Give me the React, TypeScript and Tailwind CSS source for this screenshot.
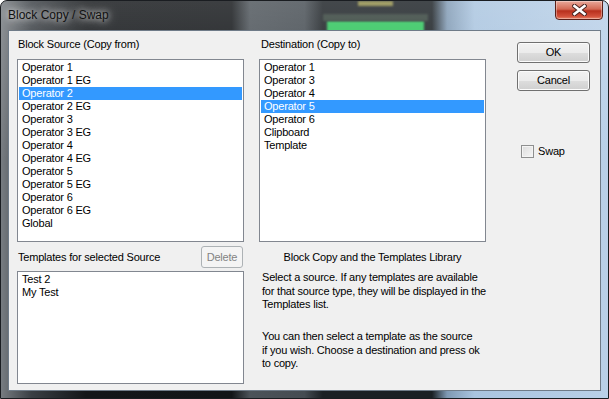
import React from 'react';

const sourceItems = [
  'Operator 1',
  'Operator 1 EG',
  'Operator 2',
  'Operator 2 EG',
  'Operator 3',
  'Operator 3 EG',
  'Operator 4',
  'Operator 4 EG',
  'Operator 5',
  'Operator 5 EG',
  'Operator 6',
  'Operator 6 EG',
  'Global',
];

const destItems = ['Operator 1', 'Operator 3', 'Operator 4', 'Operator 5', 'Operator 6', 'Clipboard', 'Template'];

const templateItems = ['Test 2', 'My Test'];

function ListBox({ items, selected, height }: { items: string[]; selected?: number; height: string }) {
  return (
    <div className={`w-[227px] ${height} border border-[#828790] bg-white p-px`}>
      {items.map((item, i) => (
        <div
          key={item}
          className={`h-[13px] leading-[13px] pl-[3px] whitespace-nowrap ${i === selected ? 'bg-[#3399ff] text-white' : 'text-black'}`}
        >
          {item}
        </div>
      ))}
    </div>
  );
}

function Win7Button({ label, disabled }: { label: string; disabled?: boolean }) {
  if (disabled) {
    return (
      <button className="h-[22px] w-[42px] rounded-[3px] border border-[#adb2b5] bg-[#f4f4f4] text-[#838383]">
        {label}
      </button>
    );
  }
  return (
    <button className="h-[21px] w-[73px] rounded-[3px] border border-[#707070] bg-[linear-gradient(to_bottom,#f2f2f2_0%,#ebebeb_50%,#dddddd_51%,#cfcfcf_100%)] shadow-[inset_0_0_0_1px_#fbfbfb] text-black leading-[19px]">
      {label}
    </button>
  );
}

export default function App() {
  return (
    <div className="relative w-[609px] h-[399px] overflow-hidden rounded-t-[7px] border border-[#1a1d21] bg-[linear-gradient(to_right,#777c81_0%,#3a3f44_5%,#131619_14%,#121518_38%,#4c5359_41%,#454c52_50%,#1b2024_53%,#1a2024_71%,#7f99b3_73.5%,#a9c4df_78%,#b9d0e8_100%)] flex flex-col">
      {/* background bleeding through the glass */}
      <div className="absolute left-[326px] top-[20px] w-[97px] h-[14px] bg-[#2fc45c] blur-[1px]" />
      <div className="absolute left-[322px] top-[13px] w-[105px] h-[7px] bg-[#33413a] blur-[1px]" />
      <div className="absolute left-[357px] top-0 w-[35px] h-[5px] bg-[#8d8a46] blur-[1px]" />
      <div className="absolute inset-0 bg-[linear-gradient(to_bottom,rgba(255,255,255,0.18),rgba(255,255,255,0)_40%)] pointer-events-none" />

      {/* title bar */}
      <div className="relative h-[29px] flex items-start">
        <span className="ml-[7px] mt-[7px] font-['Liberation_Sans',Arial,sans-serif] text-[12px] leading-[15px] text-[#111] [text-shadow:0_0_6px_rgba(255,255,255,0.9),0_0_12px_rgba(255,255,255,0.7)]">
          Block Copy / Swap
        </span>
        <div className="absolute left-[554px] top-[-1px] w-[48px] h-[20px] rounded-b-[4px] border border-[#5a2019] bg-[linear-gradient(to_bottom,#e9a99b_0%,#d36a55_45%,#b8301d_55%,#d2503a_85%,#e8866a_100%)] shadow-[inset_0_0_0_1px_rgba(255,255,255,0.35)] flex items-center justify-center">
          <svg width="15" height="12" viewBox="0 0 15 12">
            <path d="M2.5 2 L12.5 10 M12.5 2 L2.5 10" stroke="#4a2420" strokeWidth="4.5" strokeLinecap="square" />
            <path d="M2.5 2 L12.5 10 M12.5 2 L2.5 10" stroke="#ffffff" strokeWidth="2.6" strokeLinecap="square" />
          </svg>
        </div>
      </div>

      {/* client area */}
      <div className="relative mx-[7px] mb-[7px] flex-1 border border-[#6f7b88] bg-[#f0f0f0] font-['Liberation_Sans',Arial,sans-serif] text-[11px] tracking-[-0.2px] text-black">
        <div className="flex pl-[8px] pt-[6px]">
          {/* left column */}
          <div className="flex flex-col w-[227px]">
            <div className="h-[14px] leading-[14px] pl-px">Block Source (Copy from)</div>
            <div className="mt-[8px]">
              <ListBox items={sourceItems} selected={2} height="h-[183px]" />
            </div>
            <div className="mt-[4px] flex items-center justify-between pl-px pr-px">
              <span className="leading-[14px]">Templates for selected Source</span>
              <Win7Button label="Delete" disabled />
            </div>
            <div className="mt-[3px]">
              <ListBox items={templateItems} height="h-[113px]" />
            </div>
          </div>

          {/* middle column */}
          <div className="ml-[15px] flex flex-col w-[227px]">
            <div className="h-[14px] leading-[14px] pl-[2px]">Destination (Copy to)</div>
            <div className="mt-[8px]">
              <ListBox items={destItems} selected={3} height="h-[183px]" />
            </div>
            <div className="mt-[8px] h-[14px] leading-[14px] text-center">Block Copy and the Templates Library</div>
            <p className="mt-[7px] pl-[3px] leading-[13.5px] whitespace-nowrap">
              Select a source. If any templates are available
              <br />
              for that source type, they will be displayed in the
              <br />
              Templates list.
            </p>
            <p className="mt-[18.5px] pl-[3px] leading-[13.5px] whitespace-nowrap">
              You can then select a template as the source
              <br />
              if you wish. Choose a destination and press ok
              <br />
              to copy.
            </p>
          </div>

          {/* right column */}
          <div className="ml-[31px] flex flex-col w-[73px] pt-[5px]">
            <Win7Button label="OK" />
            <div className="mt-[7px]">
              <Win7Button label="Cancel" />
            </div>
            <label className="mt-[54px] ml-[4px] flex items-center gap-[4px]">
              <span className="w-[13px] h-[13px] border border-[#8e8f8f] bg-[linear-gradient(135deg,#dcdcdc_0%,#f6f6f6_100%)] shadow-[inset_0_0_0_1px_#f4f4f4]" />
              <span className="leading-[13px]">Swap</span>
            </label>
          </div>
        </div>
      </div>
    </div>
  );
}
